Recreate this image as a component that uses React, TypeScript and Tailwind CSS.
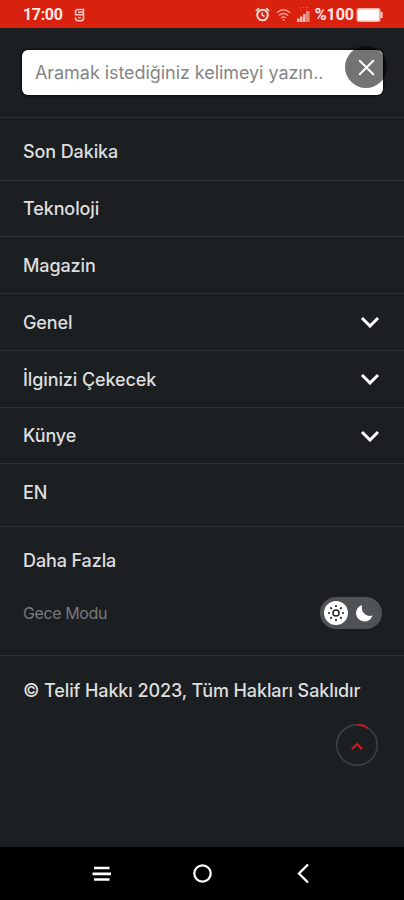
import { X } from "lucide-react";
import clsx from "clsx";

interface MenuItem {
  label: string;
  expandable?: boolean;
  className: string;
}

const MENU: MenuItem[] = [
  { label: "Son Dakika", className: "h-[63px] pt-[5px]" },
  { label: "Teknoloji", className: "h-[56px]" },
  { label: "Magazin", className: "h-[57px]" },
  { label: "Genel", expandable: true, className: "h-[57px]" },
  { label: "İlginizi Çekecek", expandable: true, className: "h-[57px]" },
  { label: "Künye", expandable: true, className: "h-[56px]" },
  { label: "EN", className: "h-[63px] pb-[5px]" },
];

function StatusBar() {
  return (
    <header className="flex h-7 shrink-0 items-center bg-[#d92110] pl-[23px] pr-[21px] pt-px text-[16px] font-bold text-[#ffe9e5]">
      <span className="font-['Roboto',sans-serif] tracking-[-0.35px]">17:00</span>
      <svg className="ml-3 h-[14px] w-[11px]" viewBox="0 0 11 14" fill="none" stroke="#ffc9c2" strokeWidth="1.5">
        <path d="M9.5 3.5V1.5H4Q1.5 1.5 1.5 4V6.8H9.5V10.5Q9.5 12.7 7 12.7H4Q1.5 12.7 1.5 10V9.3M4 4.2H9.5V6.8M4.2 9.7H6.8" />
      </svg>
      <div className="ml-auto flex items-center">
        <svg className="h-[15px] w-[15px]" viewBox="0 0 15 15" fill="none" stroke="#ffd8d2" strokeWidth="2">
          <circle cx="7.5" cy="8" r="5.3" />
          <path d="M7.3 5.3V8.5L9.6 9.3M.8 4L4 1.2M14.2 4L11 1.2" strokeWidth="1.6" />
        </svg>
        <svg className="ml-[6px] h-[14px] w-[15px]" viewBox="0 0 15 14" fill="none" stroke="#ff9d91" strokeWidth="1.3">
          <path d="M.8 4.7Q7.5-1.2 14.2 4.7M3 7.5Q7.5 3.6 12 7.5M5.2 10Q7.5 8 9.8 10" />
          <circle cx="7.5" cy="12" r="1" fill="#ff9d91" stroke="none" />
        </svg>
        <svg className="ml-[6px] h-[17px] w-[13px]" viewBox="0 0 13 17">
          <path d="M0 12.5h2.5V16H0zM3 10.5h2.500V16H3zM6 8h2.500v8H6z" fill="#ffbdb5" />
          <path d="M9 5h3.500v11H9z" fill="#f0887d" />
          <path d="M1.500 1.500h2M5 1.500h2M8.500 1.500h3M2.500 3.500h2M8.500 3.500h2" stroke="#e5493a" />
        </svg>
        <span className="ml-[5px] font-['Roboto',sans-serif] tracking-[-0.05px]">%100</span>
        <svg className="ml-[2px] h-[16px] w-[27px]" viewBox="0 0 27 16">
          <rect x=".5" y="1" width="24" height="14" rx="2.500" fill="#f9b1a9" />
          <rect x="2" y="2.500" width="21" height="11" rx="1" fill="#fff" />
          <path d="M24.500 5H26.500v6H24.500z" fill="#ffd8d2" />
        </svg>
      </div>
    </header>
  );
}

function SearchBox() {
  return (
    <div className="h-[90px] shrink-0 border-b border-[#2d3134] pl-[22px] pr-[21px] pt-[22px]">
      <div className="relative flex h-[45px] items-center rounded-[6px] bg-white pl-[13px] shadow-[0_0_2px_1px_#080a0b]">
        <input
          className="w-full bg-transparent font-['Inter',sans-serif] text-[18px] font-normal tracking-[-0.06px] text-[#757575] outline-none placeholder:text-[#858585]"
          placeholder="Aramak istediğiniz kelimeyi yazın.."
        />
        <button
          aria-label="Kapat"
          className="absolute -top-[4px] right-[-4px] flex h-[42px] w-[42px] items-center justify-center rounded-full bg-black/55"
        >
          <X className="h-[27px] w-[27px] text-white" strokeWidth={1.8} />
        </button>
      </div>
    </div>
  );
}

function MenuRow({ label, expandable, className }: MenuItem) {
  return (
    <li className={clsx("flex items-center justify-between border-b border-[#2d3134] pl-[23px] pr-6", className)}>
      <span>{label}</span>
      {expandable && (
        <svg className="h-3 w-5" viewBox="0 0 20 12" fill="none" stroke="#fff" strokeWidth="3">
          <path d="M2 2L10 10L18 2" />
        </svg>
      )}
    </li>
  );
}

function ThemeSwitch() {
  return (
    <div className="flex h-[32px] w-[62px] items-center justify-between rounded-full bg-[#505356] pl-1 pr-[9px]">
      <span className="flex h-6 w-6 items-center justify-center rounded-full bg-white">
        <svg className="h-[18px] w-[18px]" viewBox="0 0 18 18" fill="none" stroke="#222" strokeWidth="1.700">
          <circle cx="9" cy="9" r="3" strokeWidth="1.500" />
          <path d="M9 1v2M9 15v2M1 9h2M15 9h2M3.300 3.300l1.500 1.500M13.200 13.200l1.500 1.500M3.300 14.700l1.500-1.500M13.200 4.800l1.500-1.500" />
        </svg>
      </span>
      <svg className="h-[18px] w-[18px]" viewBox="0 0 18 18" fill="#fff">
        <path d="M7 1A8.400 8.400 0 1 0 17.500 11.500C12 13.500 5.500 9 7 1Z" />
      </svg>
    </div>
  );
}

function ScrollTop() {
  return (
    <svg className="h-[44px] w-[44px]" viewBox="0 0 44 44" fill="none">
      <circle cx="22" cy="22" r="20.200" stroke="#3b3f42" strokeWidth="1.700" />
      <path d="M22 1.800A20.200 20.200 0 0 1 33 5" stroke="#c5161d" strokeWidth="2" />
      <path d="M16.800 26.200L22 21L27.200 26.200" stroke="#d3151d" strokeWidth="2.200" />
    </svg>
  );
}

function NavBar() {
  return (
    <nav className="flex h-[53px] shrink-0 items-center justify-between bg-black px-[92px]">
      <svg className="h-5 w-5" viewBox="0 0 20 20" stroke="#fff" strokeWidth="2.700">
        <path d="M2 4h15.500M.5 9.800h18.500M2 15.500h15.500" />
      </svg>
      <svg className="h-5 w-5" viewBox="0 0 20 20" fill="none" stroke="#fff" strokeWidth="2.300">
        <circle cx="10.500" cy="9.500" r="8.200" />
      </svg>
      <svg className="h-5 w-5" viewBox="0 0 20 20" fill="none" stroke="#fff" strokeWidth="2.300">
        <path d="M16 .5L7 9.500L16 18.500" />
      </svg>
    </nav>
  );
}

export default function App() {
  return (
    <div className="flex h-[900px] w-[404px] flex-col overflow-hidden bg-[#1c1f22] font-['Inter',sans-serif] text-[18px] font-medium tracking-[-0.11px] text-[#dedede]">
      <StatusBar />
      <SearchBox />
      <ul className="shrink-0">
        {MENU.map((item) => (
          <MenuRow key={item.label} {...item} />
        ))}
      </ul>
      <section className="h-[129px] shrink-0 border-b border-[#2d3134] pl-[23px] pr-[22px] pt-5">
        <h2 className="leading-7">Daha Fazla</h2>
        <div className="mt-[22px] flex items-center justify-between">
          <span className="text-[16px] font-normal tracking-[-0.4px] text-[#77797b]">Gece Modu</span>
          <ThemeSwitch />
        </div>
      </section>
      <p className="mt-[21px] whitespace-nowrap pl-[23px] leading-7">© Telif Hakkı 2023, Tüm Hakları Saklıdır</p>
      <div className="mt-[18px] flex flex-1 justify-end pr-[25px]">
        <ScrollTop />
      </div>
      <NavBar />
    </div>
  );
}
